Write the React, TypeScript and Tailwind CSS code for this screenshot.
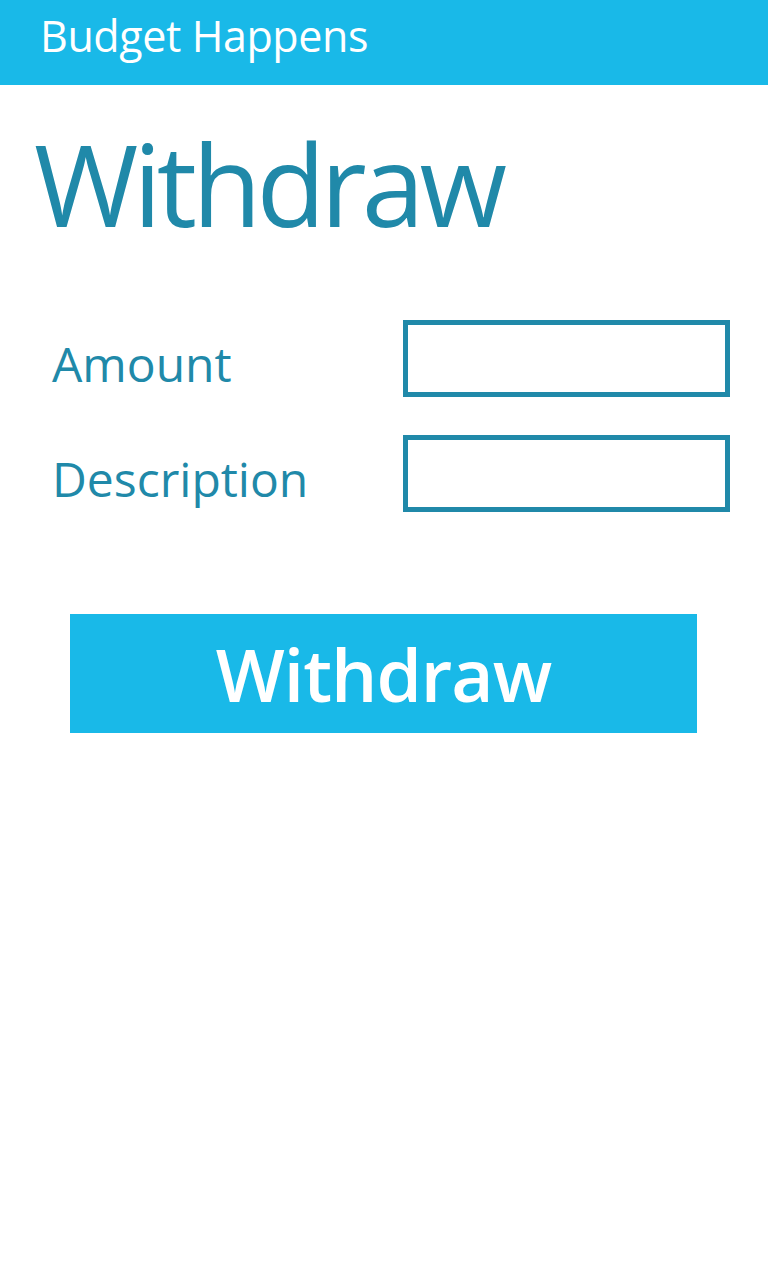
import React from "react";

export default function App() {
  return (
    <div className="w-[768px] h-[1280px] bg-white font-['Open_Sans',sans-serif]">
      <header className="h-[85px] bg-[#19b9e8] pl-[40px] pt-[14px]">
        <div className="text-white text-[43px] leading-none tracking-[-0.4px]">Budget Happens</div>
      </header>
      <h1 className="mt-[42px] pl-[34px] text-[113px] leading-none font-normal tracking-[-5px] text-[#2089a9]">
        Withdraw
      </h1>
      <div className="mt-[80px] flex flex-col gap-[38px]">
        <div className="flex items-start">
          <label className="w-[403px] pl-[52px] pt-[20px] text-[48px] leading-none text-[#2089a9]">
            Amount
          </label>
          <input className="w-[327px] h-[77px] border-[5px] border-[#2089a9] bg-white outline-none" />
        </div>
        <div className="flex items-start">
          <label className="w-[403px] pl-[52px] pt-[20px] text-[48px] leading-none text-[#2089a9]">
            Description
          </label>
          <input className="w-[327px] h-[77px] border-[5px] border-[#2089a9] bg-white outline-none" />
        </div>
      </div>
      <div className="mt-[102px] pl-[70px]">
        <button className="w-[627px] h-[119px] bg-[#19b9e8] text-white text-[73px] font-semibold leading-none tracking-[-1px] flex items-center justify-center">
          Withdraw
        </button>
      </div>
    </div>
  );
}
